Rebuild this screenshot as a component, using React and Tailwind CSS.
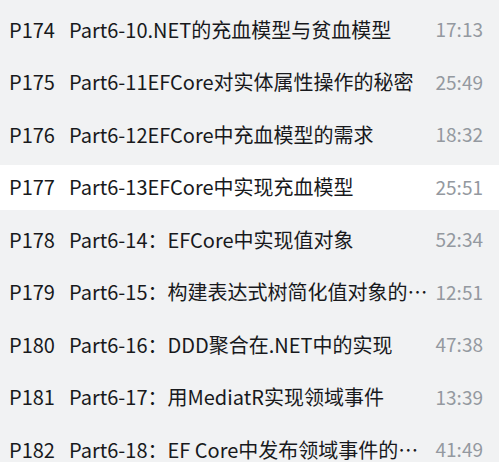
import React from 'react'

const episodes = [
  { p: 'P174', title: 'Part6-10.NET的充血模型与贫血模型', time: '17:13' },
  { p: 'P175', title: 'Part6-11EFCore对实体属性操作的秘密', time: '25:49' },
  { p: 'P176', title: 'Part6-12EFCore中充血模型的需求', time: '18:32' },
  { p: 'P177', title: 'Part6-13EFCore中实现充血模型', time: '25:51', active: true },
  { p: 'P178', title: 'Part6-14：EFCore中实现值对象', time: '52:34' },
  { p: 'P179', title: 'Part6-15：构建表达式树简化值对象的比较', time: '12:51' },
  { p: 'P180', title: 'Part6-16：DDD聚合在.NET中的实现', time: '47:38' },
  { p: 'P181', title: 'Part6-17：用MediatR实现领域事件', time: '13:39' },
  { p: 'P182', title: 'Part6-18：EF Core中发布领域事件的合适时机', time: '41:49' },
]

const App = () => {
  return (
    <div className="min-h-screen w-[499px] h-[462px] overflow-hidden bg-[#f1f2f3] pt-[7px] font-['Noto_Sans_CJK_SC','Noto_Sans',sans-serif]">
      <ul className="flex flex-col gap-[7.5px]">
        {episodes.map((ep) => (
          <li
            key={ep.p}
            className={`flex items-center h-[45px] pl-[9px] pr-[16px] text-[20px] ${ep.active ? 'bg-white' : ''}`}
          >
            <span className="w-[60px] shrink-0 text-[#18191c]">{ep.p}</span>
            <span className="flex-1 min-w-0 truncate text-[#18191c]">{ep.title}</span>
            <span className="ml-[3px] shrink-0 text-[19px] text-[#9499a0]">{ep.time}</span>
          </li>
        ))}
      </ul>
    </div>
  )
}

export default App
